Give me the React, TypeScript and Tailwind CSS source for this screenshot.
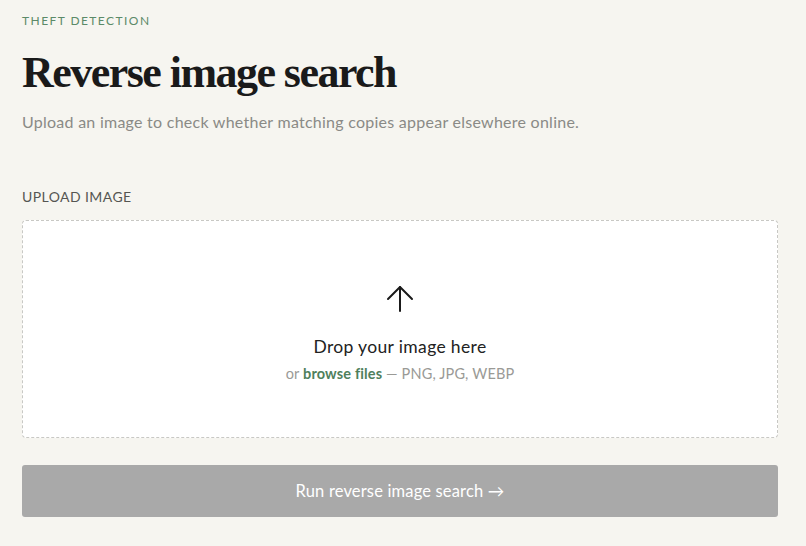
import React from "react";

export default function App() {
  return (
    <div
      className="min-h-[546px] w-full bg-[#f6f5f0] px-[22px] pt-[13px]"
      style={{ fontFamily: "Lato, 'Noto Sans', sans-serif" }}
    >
      <div className="w-[756px]">
        <div className="text-[12px] leading-[16px] tracking-[0.12em] text-[#5b8a68]">
          THEFT DETECTION
        </div>
        <h1
          className="mt-[19px] text-[44px] leading-[50px] font-bold tracking-[-0.035em] text-[#1a1a1a]"
          style={{ fontFamily: "'Liberation Serif', serif" }}
        >
          Reverse image search
        </h1>
        <p className="mt-[13px] text-[16px] leading-[22px] tracking-[0.016em] text-[#8a8a86]">
          Upload an image to check whether matching copies appear elsewhere online.
        </p>
        <div className="mt-[55px] text-[14px] leading-[18px] tracking-[0.03em] text-[#555552]">
          UPLOAD IMAGE
        </div>
        <div className="mt-[14px] flex h-[218px] flex-col items-center rounded-[4px] border border-dashed border-[#c8c8c4] bg-white pt-[63px]">
          <svg width="30" height="30" viewBox="0 0 30 30" fill="none" stroke="#1a1a1a" strokeWidth="2" strokeLinecap="round" strokeLinejoin="round">
            <path d="M15 27V3" />
            <path d="M3 15L15 3L27 15" />
          </svg>
          <div className="mt-[22px] text-[17.5px] leading-[22px] tracking-[0.02em] text-[#222]">Drop your image here</div>
          <div className="mt-[7px] text-[14.5px] leading-[18px] tracking-[0.01em] text-[#9a9a96]">
            or <span className="font-bold text-[#4f7f5c]">browse files</span> — PNG, JPG, WEBP
          </div>
        </div>
        <button className="mt-[27px] flex h-[52px] w-full items-center justify-center rounded-[3px] bg-[#a9a9a9] text-[16.5px] tracking-[0.01em] text-white">
          Run reverse image search →
        </button>
      </div>
    </div>
  );
}
